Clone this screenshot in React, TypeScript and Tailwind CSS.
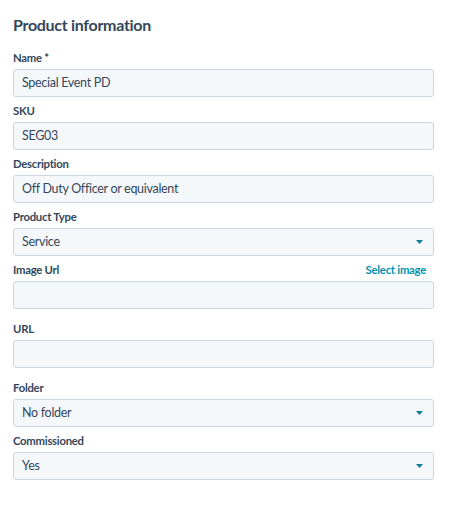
import React from "react";

const font = { fontFamily: '"Lato", "Noto Sans", sans-serif' };

function Label({ children, right }: { children: React.ReactNode; right?: React.ReactNode }) {
  return (
    <div className="flex items-center justify-between h-[14px] mb-[4px]">
      <span className="text-[11.3px] font-bold text-[#33475b] leading-[14px] tracking-[-0.25px]">
        {children}
      </span>
      {right}
    </div>
  );
}

function Input({ value, select }: { value?: string; select?: boolean }) {
  return (
    <div className="h-[28px] w-full rounded-[3px] border border-[#cbd6e2] bg-[#f5f8fa] flex items-center justify-between pl-[8px] pr-[10px]">
      <span className="text-[12.5px] text-[#33475b] tracking-[-0.3px]">{value}</span>
      {select && (
        <svg width="7" height="4" viewBox="0 0 7 4">
          <path d="M0 0 H7 L3.5 4 Z" fill="#0a7e98" />
        </svg>
      )}
    </div>
  );
}

function Field({
  label,
  value,
  select,
  right,
  extra,
}: {
  label: string;
  value?: string;
  select?: boolean;
  right?: React.ReactNode;
  extra?: boolean;
}) {
  return (
    <div className={extra ? "mb-[13px]" : "mb-[7px]"}>
      <Label right={right}>{label}</Label>
      <Input value={value} select={select} />
    </div>
  );
}

export default function App() {
  return (
    <div className="w-[450px] h-[508px] bg-white" style={font}>
      <div className="pl-[13px] pr-[16px] pt-[15px]">
        <h1 className="text-[16px] font-bold text-[#33475b] leading-[20px] mb-[16px] tracking-[-0.3px]">
          Product information
        </h1>
        <Field label="Name *" value="Special Event PD" />
        <Field label="SKU" value="SEG03" />
        <Field label="Description" value="Off Duty Officer or equivalent" />
        <Field label="Product Type" value="Service" select />
        <Field
          label="Image Url"
          extra
          right={
            <span className="text-[11.3px] font-bold text-[#0091ae] pr-[8px] tracking-[-0.25px]">
              Select image
            </span>
          }
        />
        <Field label="URL" extra />
        <Field label="Folder" value="No folder" select />
        <Field label="Commissioned" value="Yes" select />
      </div>
    </div>
  );
}
